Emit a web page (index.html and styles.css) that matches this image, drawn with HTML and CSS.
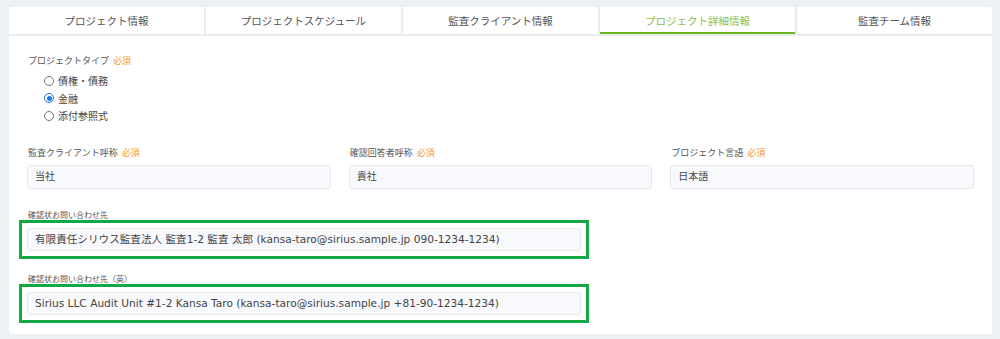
FILE: index.html
```html
<!DOCTYPE html>
<html>
  <head>
    <meta charset="UTF-8" />
    <title>プロジェクト詳細情報</title>
    <link rel="stylesheet" href="styles.css">
  </head>
  <body>
    <div class="card">
      <!-- TABS -->
      <ul class="tabs">
        <li class="tab">プロジェクト情報</li>
        <li class="tab">プロジェクトスケジュール</li>
        <li class="tab">監査クライアント情報</li>
        <li class="tab active">プロジェクト詳細情報</li>
        <li class="tab">監査チーム情報</li>
      </ul>

      <div class="content">
        <!-- PROJECT TYPE -->
        <div class="type-group">
          <div class="label">プロジェクトタイプ <span class="req">必須</span></div>
          <div class="radios">
            <div class="radio"><span class="dot"></span>債権・債務</div>
            <div class="radio"><span class="dot checked"></span>金融</div>
            <div class="radio"><span class="dot"></span>添付参照式</div>
          </div>
        </div>

        <!-- NAMES ROW -->
        <div class="row3">
          <div class="field">
            <div class="label">監査クライアント呼称 <span class="req">必須</span></div>
            <div class="input">当社</div>
          </div>
          <div class="field">
            <div class="label">確認回答者呼称 <span class="req">必須</span></div>
            <div class="input">貴社</div>
          </div>
          <div class="field">
            <div class="label">プロジェクト言語 <span class="req">必須</span></div>
            <div class="input">日本語</div>
          </div>
        </div>

        <!-- CONTACTS -->
        <div class="contact">
          <div class="label small">確認状お問い合わせ先</div>
          <div class="highlight">
            <div class="input">有限責任シリウス監査法人 監査1-2 監査 太郎 (kansa-taro@sirius.sample.jp 090-1234-1234)</div>
          </div>
        </div>
        <div class="contact">
          <div class="label small">確認状お問い合わせ先（英）</div>
          <div class="highlight">
            <div class="input">Sirius LLC Audit Unit #1-2 Kansa Taro (kansa-taro@sirius.sample.jp +81-90-1234-1234)</div>
          </div>
        </div>
      </div>
    </div>
  </body>
</html>
```

FILE: styles.css
```css
body {
  margin: 0;
  padding: 7px 8px 7px 9px;
  background: #eef1f4;
  font-family: "DejaVu Sans", "Noto Sans CJK JP", sans-serif;
  color: #555;
}
.card {
  background: #fff;
  border-radius: 3px;
  padding-bottom: 11px;
}
.tabs {
  display: flex;
  margin: 0;
  padding: 0;
  list-style: none;
  border-bottom: 2px solid #e9edf0;
}
.tab {
  flex: 1;
  height: 27px;
  line-height: 27px;
  text-align: center;
  font-family: "Noto Sans CJK JP", sans-serif;
  font-size: 10.5px;
  color: #555;
  border-left: 2px solid #e9edf0;
}
.tab:first-child {
  border-left: none;
}
.tab.active {
  color: #8cc04c;
  box-shadow: inset 0 -2px 0 #6cb71e;
}
.content {
  padding: 19px 18px 0 18px;
}
.label {
  font-family: "Noto Sans CJK JP", sans-serif;
  font-size: 9px;
  line-height: 12px;
  color: #555;
  padding-left: 1px;
}
.label.small {
  font-size: 8px;
  line-height: 11px;
}
.req {
  color: #f39a2a;
  margin-left: 2px;
}
.radios {
  margin: 5px 0 0 17px;
}
.radio {
  display: flex;
  align-items: center;
  height: 17.5px;
  font-family: "Noto Sans CJK JP", sans-serif;
  font-size: 10px;
  color: #444;
}
.dot {
  width: 8px;
  height: 8px;
  border: 1px solid #767676;
  border-radius: 50%;
  margin-right: 4px;
  position: relative;
}
.dot.checked {
  border-color: #1a73e8;
}
.dot.checked::after {
  content: "";
  position: absolute;
  left: 1.5px;
  top: 1.5px;
  width: 5px;
  height: 5px;
  border-radius: 50%;
  background: #1a73e8;
}
.row3 {
  display: grid;
  grid-template-columns: 1fr 1fr 1fr;
  gap: 18px;
  margin-top: 22px;
}
.field .label {
  margin-bottom: 6px;
}
.input {
  height: 22px;
  line-height: 22px;
  padding: 0 7px;
  background: #f8f9fc;
  border: 1px solid #e6e9ee;
  border-radius: 3px;
  font-size: 10px;
  color: #444;
  white-space: nowrap;
  overflow: hidden;
}
.contact {
  margin-top: 20px;
}
.contact + .contact {
  margin-top: 14px;
}
.highlight {
  width: 554px;
  margin-left: -8px;
  padding: 5px;
  border: 3px solid #12a844;
}
.highlight .input {
  height: 21px;
  line-height: 21px;
  font-size: 10.6px;
}
```
